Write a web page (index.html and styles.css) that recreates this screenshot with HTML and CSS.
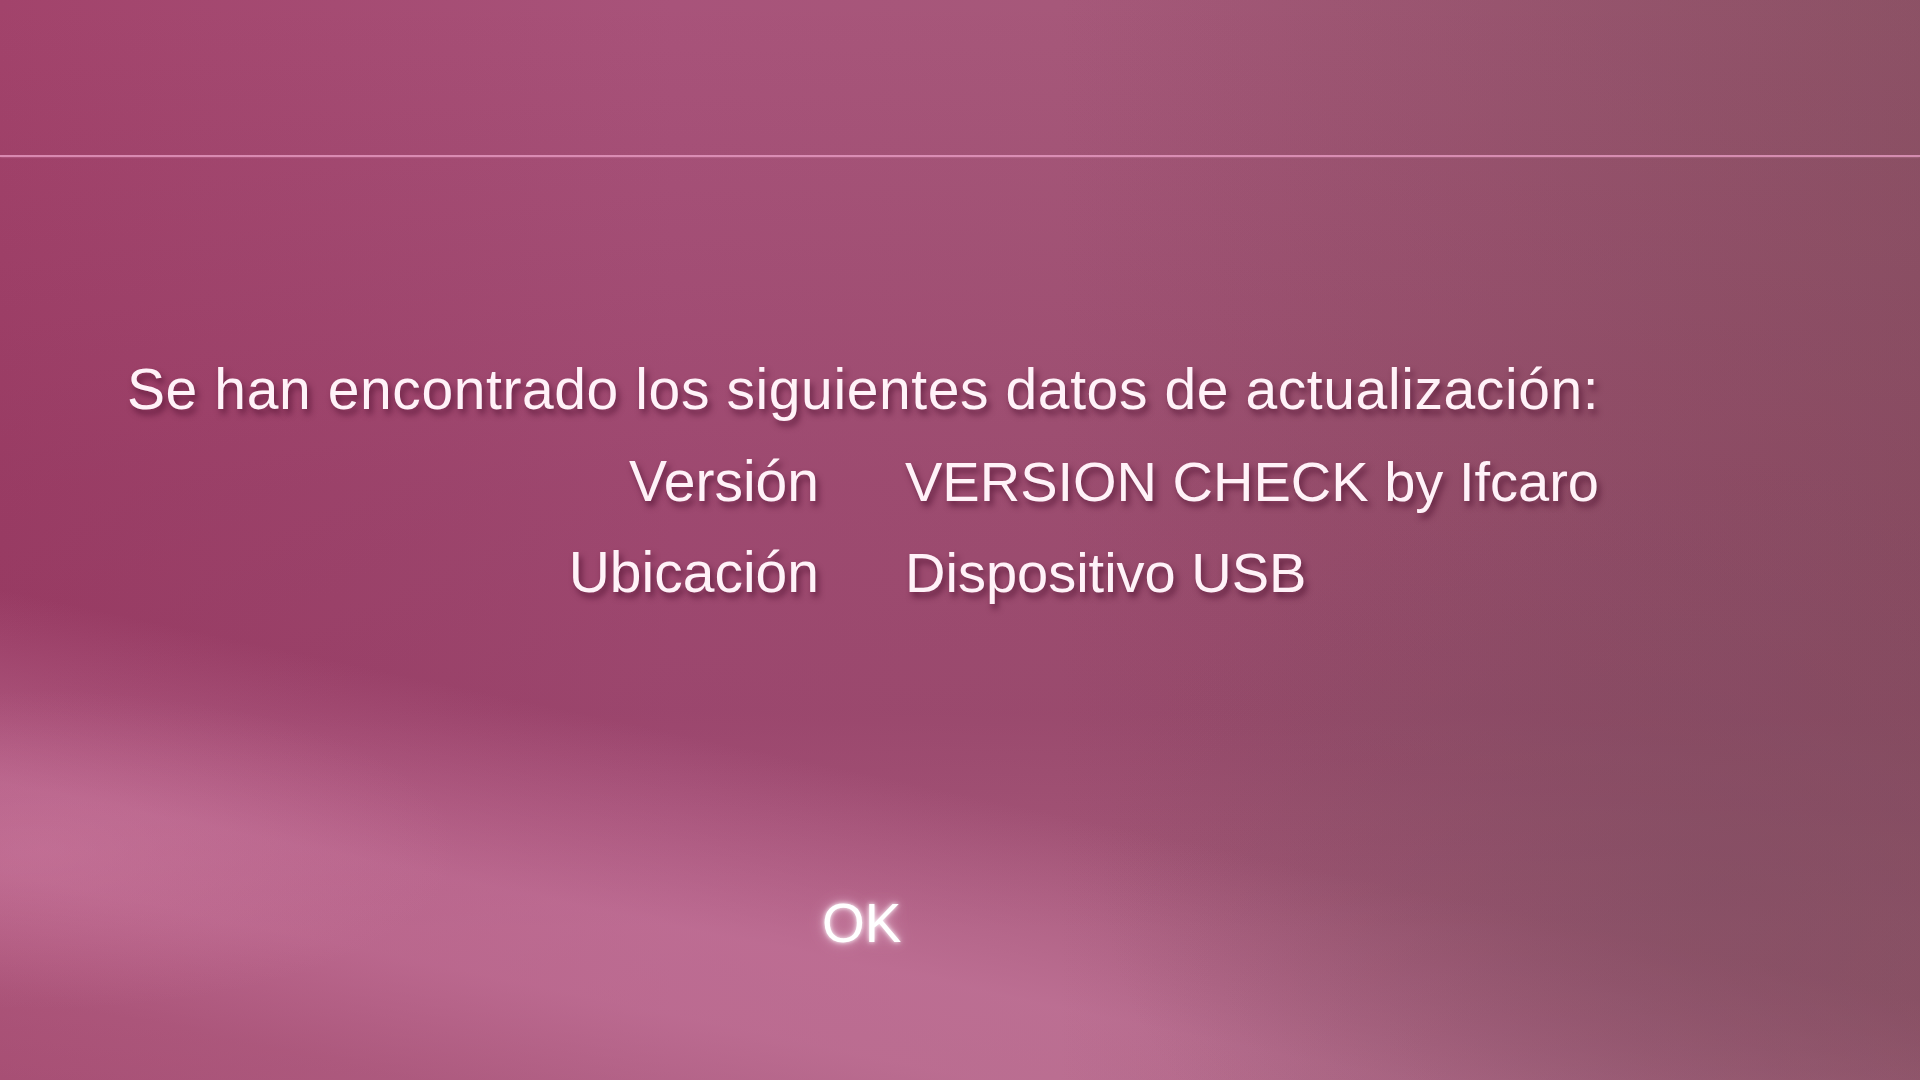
FILE: index.html
```html
<!DOCTYPE html>
<html lang="es">
<head>
<meta charset="utf-8">
<title>Actualización del sistema</title>
<link rel="stylesheet" href="styles.css">
</head>
<body>
<div class="screen">
  <div class="topbar"></div>
  <main class="dialog">
    <p class="message">Se han encontrado los siguientes datos de actualización:</p>
    <div class="details">
      <div class="label">Versión</div>
      <div class="value">VERSION CHECK by Ifcaro</div>
      <div class="label">Ubicación</div>
      <div class="value">Dispositivo USB</div>
    </div>
    <div class="actions">
      <span class="button focused">OK</span>
    </div>
  </main>
</div>
</body>
</html>
```
FILE: styles.css
```css
html, body {
  margin: 0;
  padding: 0;
  width: 1920px;
  height: 1080px;
  overflow: hidden;
}

body {
  font-family: "Liberation Sans", Arial, sans-serif;
  color: #fff2f8;
}

.screen {
  width: 1920px;
  height: 1080px;
  display: flex;
  flex-direction: column;
  background:
    radial-gradient(ellipse 620px 420px at 1720px 880px, rgba(128,78,98,0.55), rgba(128,78,98,0) 100%),
    linear-gradient(to right, rgba(0,0,0,0) 55%, rgba(130,78,98,0.42) 100%),
    radial-gradient(ellipse 420px 160px at 40px 850px, rgba(225,150,185,0.25), rgba(225,150,185,0) 100%),
    linear-gradient(192deg,
      rgba(0,0,0,0) 0%,
      rgba(0,0,0,0) 67%,
      rgba(214,138,176,0.45) 80%,
      rgba(214,140,176,0.42) 86%,
      rgba(190,120,150,0.3) 94%,
      rgba(180,110,140,0.28) 100%),
    linear-gradient(to bottom,
      rgba(0,0,0,0) 0%,
      rgba(110,25,65,0.18) 45%,
      rgba(110,25,65,0.22) 66%,
      rgba(0,0,0,0) 86%),
    linear-gradient(to right, #a2436b 0%, #a8537a 35%, #a6587a 55%, #9e5672 78%, #945468 100%);
}

.topbar {
  height: 155px;
  flex: none;
  border-bottom: 2px solid rgba(236,160,200,0.75);
  box-shadow: 0 0 2px rgba(240,170,205,0.5);
}

.dialog {
  display: flex;
  flex-direction: column;
  padding-top: 187px;
}

.message,
.label,
.value {
  font-size: 57px;
  line-height: 91px;
  text-shadow: 3px 5px 6px rgba(70, 10, 40, 0.62);
}

.message {
  margin: 0 0 1px 0;
  padding-left: 127px;
  letter-spacing: 0.6px;
  white-space: nowrap;
}

.details {
  display: grid;
  grid-template-columns: 819px auto;
  column-gap: 86px;
}

.label {
  text-align: right;
  font-size: 57px;
}

.value {
  text-align: left;
  white-space: nowrap;
  font-size: 56px;
}

.actions {
  margin-top: 260px;
  padding-left: 822px;
}

.button {
  font-size: 55px;
  line-height: 91px;
  color: #ffffff;
}

.button.focused {
  text-shadow:
    0 0 4px rgba(255, 255, 255, 0.9),
    0 0 10px rgba(255, 230, 245, 0.7),
    0 0 20px rgba(255, 210, 235, 0.45);
}
```
